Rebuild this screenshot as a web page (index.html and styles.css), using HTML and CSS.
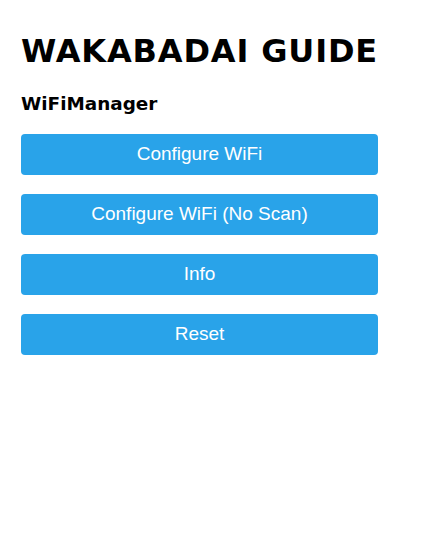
FILE: index.html
```html
<!DOCTYPE html>
<html>
<head>
<meta charset="utf-8">
<link rel="stylesheet" href="styles.css">
</head>
<body>
<div class="wrap">
  <h1 class="title">WAKABADAI GUIDE</h1>
  <h3 class="sub">WiFiManager</h3>
  <div class="buttons">
    <button class="btn">Configure WiFi</button>
    <button class="btn">Configure WiFi (No Scan)</button>
    <button class="btn">Info</button>
    <button class="btn">Reset</button>
  </div>
</div>
</body>
</html>
```
FILE: styles.css
```css
body {
  margin: 8px;
  font-family: "DejaVu Sans", Verdana, sans-serif;
  background: #fff;
  color: #000;
}
.wrap {
  width: 357px;
  padding-left: 13px;
}
.title {
  font-size: 32px;
  font-weight: bold;
  letter-spacing: 0.85px;
  white-space: nowrap;
  margin: 25px 0 0 0;
  line-height: 37px;
}
.sub {
  font-size: 18.4px;
  font-weight: bold;
  margin: 23px 0 0 0;
  line-height: 22px;
}
.buttons {
  display: flex;
  flex-direction: column;
  gap: 19px;
  margin-top: 19px;
}
.btn {
  display: block;
  width: 100%;
  height: 41px;
  border: 0;
  border-radius: 4px;
  background: #29a3e9;
  color: #fff;
  font-family: "Liberation Sans", Arial, sans-serif;
  font-size: 19px;
  padding: 0 0 1px 0;
}
```
